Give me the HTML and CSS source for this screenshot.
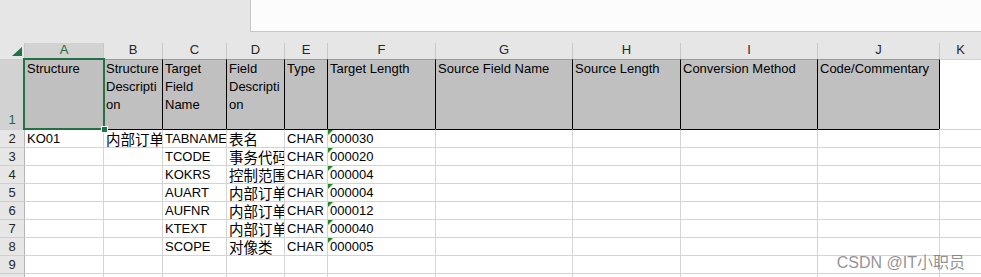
FILE: index.html
```html
<!DOCTYPE html>
<html lang="zh-CN">
<head>
    <meta charset="UTF-8">
    <meta name="viewport" content="width=device-width, initial-scale=1.0">
    <title>Mapping - Sheet1</title>
    <link rel="stylesheet" href="styles.css">
</head>
<body>
    <div class="topbar">
        <div class="formula"></div>
    </div>

    <div class="sheet">
        <!-- column letters -->
        <div class="row">
            <div class="corner">
                <svg width="24" height="16" viewBox="0 0 24 16"><polygon points="22,4 22,13 12,13" fill="#217346"/></svg>
            </div>
            <div class="ch sel">A</div>
            <div class="ch">B</div>
            <div class="ch">C</div>
            <div class="ch">D</div>
            <div class="ch">E</div>
            <div class="ch">F</div>
            <div class="ch">G</div>
            <div class="ch">H</div>
            <div class="ch">I</div>
            <div class="ch">J</div>
            <div class="ch">K</div>
        </div>

        <!-- row 1: field titles -->
        <div class="row">
            <div class="rh sel tall">1</div>
            <div class="c hd a1">Structure</div>
            <div class="c hd">Structure Description</div>
            <div class="c hd">Target Field Name</div>
            <div class="c hd">Field Description</div>
            <div class="c hd">Type</div>
            <div class="c hd">Target Length</div>
            <div class="c hd">Source Field Name</div>
            <div class="c hd">Source Length</div>
            <div class="c hd">Conversion Method</div>
            <div class="c hd">Code/Commentary</div>
            <div class="c hd-end"></div>
        </div>

        <div class="row first">
            <div class="rh">2</div>
            <div class="c">KO01</div>
            <div class="c"><span class="zh">内部订单导入</span></div>
            <div class="c">TABNAME</div>
            <div class="c"><span class="zh">表名</span></div>
            <div class="c">CHAR</div>
            <div class="c tn">000030</div>
            <div class="c"></div>
            <div class="c"></div>
            <div class="c"></div>
            <div class="c"></div>
            <div class="c"></div>
        </div>

        <div class="row">
            <div class="rh">3</div>
            <div class="c"></div>
            <div class="c"></div>
            <div class="c">TCODE</div>
            <div class="c"><span class="zh">事务代码</span></div>
            <div class="c">CHAR</div>
            <div class="c tn">000020</div>
            <div class="c"></div>
            <div class="c"></div>
            <div class="c"></div>
            <div class="c"></div>
            <div class="c"></div>
        </div>

        <div class="row">
            <div class="rh">4</div>
            <div class="c"></div>
            <div class="c"></div>
            <div class="c">KOKRS</div>
            <div class="c"><span class="zh">控制范围</span></div>
            <div class="c">CHAR</div>
            <div class="c tn">000004</div>
            <div class="c"></div>
            <div class="c"></div>
            <div class="c"></div>
            <div class="c"></div>
            <div class="c"></div>
        </div>

        <div class="row">
            <div class="rh">5</div>
            <div class="c"></div>
            <div class="c"></div>
            <div class="c">AUART</div>
            <div class="c"><span class="zh">内部订单类型</span></div>
            <div class="c">CHAR</div>
            <div class="c tn">000004</div>
            <div class="c"></div>
            <div class="c"></div>
            <div class="c"></div>
            <div class="c"></div>
            <div class="c"></div>
        </div>

        <div class="row">
            <div class="rh">6</div>
            <div class="c"></div>
            <div class="c"></div>
            <div class="c">AUFNR</div>
            <div class="c"><span class="zh">内部订单号</span></div>
            <div class="c">CHAR</div>
            <div class="c tn">000012</div>
            <div class="c"></div>
            <div class="c"></div>
            <div class="c"></div>
            <div class="c"></div>
            <div class="c"></div>
        </div>

        <div class="row">
            <div class="rh">7</div>
            <div class="c"></div>
            <div class="c"></div>
            <div class="c">KTEXT</div>
            <div class="c"><span class="zh">内部订单描述</span></div>
            <div class="c">CHAR</div>
            <div class="c tn">000040</div>
            <div class="c"></div>
            <div class="c"></div>
            <div class="c"></div>
            <div class="c"></div>
            <div class="c"></div>
        </div>

        <div class="row">
            <div class="rh">8</div>
            <div class="c"></div>
            <div class="c"></div>
            <div class="c">SCOPE</div>
            <div class="c"><span class="zh">对像类</span></div>
            <div class="c">CHAR</div>
            <div class="c tn">000005</div>
            <div class="c"></div>
            <div class="c"></div>
            <div class="c"></div>
            <div class="c"></div>
            <div class="c"></div>
        </div>

        <div class="row">
            <div class="rh">9</div>
            <div class="c"></div>
            <div class="c"></div>
            <div class="c"></div>
            <div class="c"></div>
            <div class="c"></div>
            <div class="c"></div>
            <div class="c"></div>
            <div class="c"></div>
            <div class="c"></div>
            <div class="c"></div>
            <div class="c"></div>
        </div>

        <!-- only the top edge of row 10 is on screen -->
        <div class="row">
            <div class="rh"></div>
            <div class="c"></div>
            <div class="c"></div>
            <div class="c"></div>
            <div class="c"></div>
            <div class="c"></div>
            <div class="c"></div>
            <div class="c"></div>
            <div class="c"></div>
            <div class="c"></div>
            <div class="c"></div>
            <div class="c"></div>
        </div>
    </div>

    <div class="watermark">CSDN @IT<span class="zh-wm">小职员</span></div>
</body>
</html>
```

FILE: styles.css
```css
html, body {
    margin: 0;
    height: 277px;
    overflow: hidden;
}
body {
    position: relative;
    background-color: #e6e6e6;
    font-family: "Liberation Sans", Arial, "Noto Sans CJK SC", sans-serif;
    font-size: 13px;
    color: #000;
}
.topbar {
    height: 32px;
    margin-bottom: 11px;
}
.formula {
    box-sizing: border-box;
    height: 32px;
    margin-left: 250px;
    background-color: #fcfcfc;
    border-left: 1px solid #c6c6c6;
    border-bottom: 1px solid #c6c6c6;
}
.sheet {
    display: grid;
    grid-template-columns: 24px 79px 59px 64px 58px 43px 108px 137px 108px 137px 122px 42px;
    grid-template-rows: 16px 70px repeat(8, 18px) 4px;
}
.row {
    display: contents;
}
.corner {
    background-color: #e6e6e6;
}
.corner svg {
    display: block;
}
.ch {
    box-sizing: border-box;
    border-left: 1px solid #c8c8c8;
    background-color: #e6e6e6;
    color: #262626;
    text-align: center;
    line-height: 14px;
}
.rh {
    box-sizing: border-box;
    border-top: 1px solid #cfcfcf;
    background-color: #e6e6e6;
    color: #262626;
    text-align: center;
    line-height: 18px;
    overflow: hidden;
}
.sel {
    background-color: #d2d2d2;
    color: #1e6b41;
}
.tall {
    display: flex;
    align-items: flex-end;
    justify-content: center;
}
.c {
    box-sizing: border-box;
    border-left: 1px solid #d4d4d4;
    border-top: 1px solid #d4d4d4;
    background-color: #fff;
    padding: 0 2px;
    line-height: 18px;
    white-space: nowrap;
    overflow: hidden;
}
.row > .c:nth-child(2) {
    border-left-color: #b4b4b4;
}
.hd {
    background-color: #c0c0c0;
    border-left-color: #000;
    border-top-color: #9a9a9a;
    white-space: normal;
    overflow-wrap: anywhere;
}
.hd-end {
    box-sizing: border-box;
    border-left: 1px solid #000;
    border-top: 1px solid #d4d4d4;
    background-color: #fff;
}
.first .c {
    border-top-color: #000;
}
.first .c:last-child {
    border-top-color: #d4d4d4;
}
.zh {
    font-family: "Noto Sans CJK SC", sans-serif;
    font-size: 14.5px;
}

/* active cell A1 */
.a1 {
    position: relative;
    overflow: visible;
    z-index: 2;
}
.a1::after {
    content: "";
    position: absolute;
    left: -2px;
    top: -2px;
    right: -2px;
    bottom: -1px;
    border: 2px solid #217346;
}
.a1::before {
    content: "";
    position: absolute;
    right: -5px;
    bottom: -4px;
    width: 5px;
    height: 5px;
    background-color: #217346;
    border: 1px solid #fff;
    z-index: 1;
}

/* number stored as text marker */
.tn {
    position: relative;
}
.tn::before {
    content: "";
    position: absolute;
    top: 0;
    left: 0;
    border-top: 5px solid #1f8a1f;
    border-right: 5px solid transparent;
}

.watermark {
    position: absolute;
    right: 16px;
    top: 249px;
    font-family: "Liberation Sans", "Noto Sans CJK SC", sans-serif;
    font-size: 16px;
    color: rgba(110, 110, 110, 0.75);
}
.zh-wm {
    font-family: "Noto Sans CJK SC", sans-serif;
}
```
